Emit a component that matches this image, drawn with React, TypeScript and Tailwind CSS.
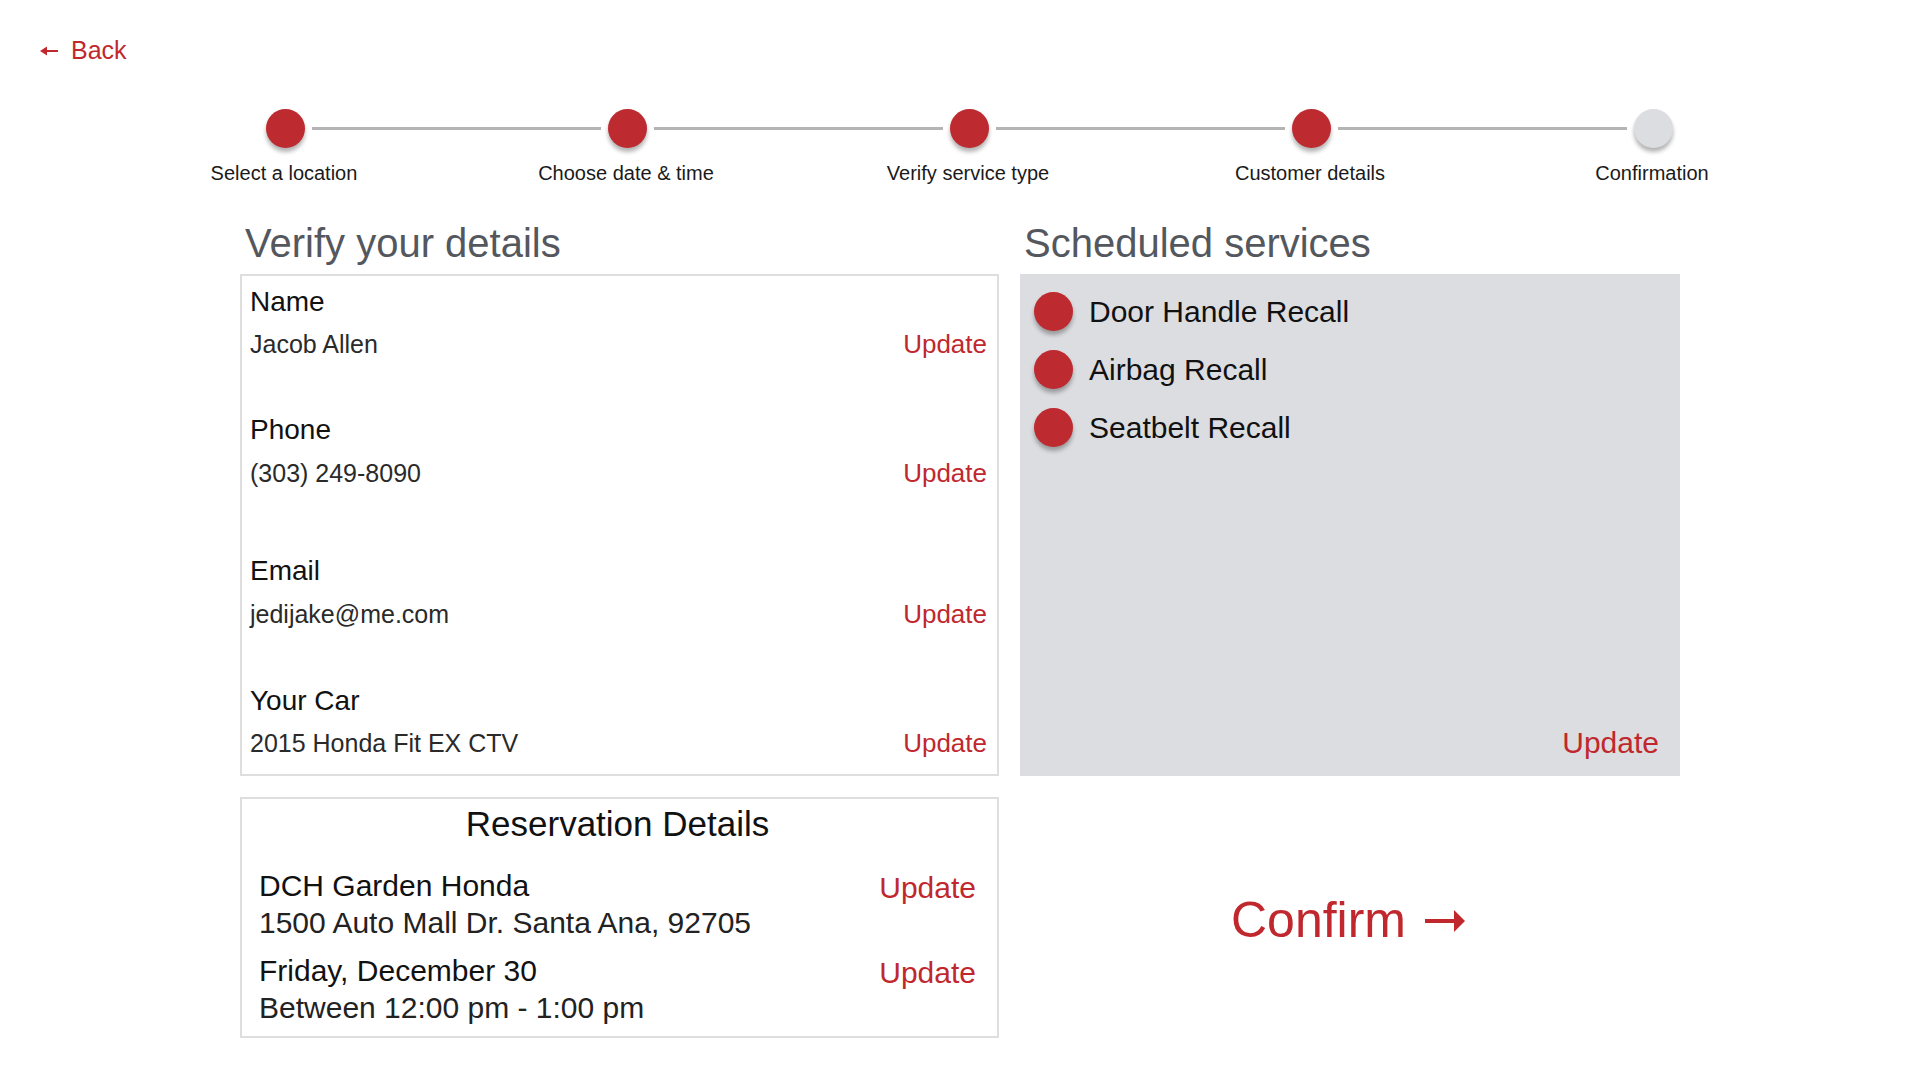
import React from "react";

function Dot({ done = true }: { done?: boolean }) {
  return (
    <div
      className={
        done
          ? "w-[39px] h-[39px] rounded-full shrink-0 bg-[#bd2a30] shadow-[0_4px_4px_rgba(0,0,0,0.3)]"
          : "w-[39px] h-[39px] rounded-full shrink-0 bg-[#dcdde0] shadow-[0_4px_4px_rgba(0,0,0,0.3)]"
      }
    />
  );
}

function Line() {
  return <div className="mx-[7px] w-[289px] h-[3px] bg-[#b4b4b4]" />;
}

function DetailGroup({
  label,
  value,
  mt,
  vmt,
}: {
  label: string;
  value: string;
  mt: string;
  vmt: string;
}) {
  return (
    <div className={mt}>
      <div className="text-[28px] leading-none text-[#111]">{label}</div>
      <div className={`${vmt} flex items-baseline justify-between`}>
        <span className="text-[25px] leading-none text-[#2a2a2a]">{value}</span>
        <span className="text-[26px] leading-none text-[#c0282e]">Update</span>
      </div>
    </div>
  );
}

export default function App() {
  const steps = [
    "Select a location",
    "Choose date & time",
    "Verify service type",
    "Customer details",
    "Confirmation",
  ];
  const services = ["Door Handle Recall", "Airbag Recall", "Seatbelt Recall"];
  return (
    <div className="w-[1920px] h-[1080px] bg-white overflow-hidden font-['Liberation_Sans',Arial,sans-serif]">
      {/* Back */}
      <div className="pt-[38px] pl-[40px] flex items-center gap-[13px] text-[#c0282e]">
        <svg width="18" height="12" viewBox="0 0 18 12" className="mt-[1px]">
          <path d="M0 6 L7 1.5 L7 10.5 Z" fill="#c0282e" />
          <rect x="5" y="5" width="13" height="2" fill="#c0282e" />
        </svg>
        <span className="text-[25px] leading-none">Back</span>
      </div>

      {/* Stepper */}
      <div className="mt-[46px] ml-[266px] flex items-center">
        <Dot />
        <Line />
        <Dot />
        <Line />
        <Dot />
        <Line />
        <Dot />
        <Line />
        <Dot done={false} />
      </div>
      <div className="mt-[15px] ml-[113px] w-[1710px] grid grid-cols-5">
        {steps.map((s) => (
          <div key={s} className="text-center text-[20px] leading-none text-[#1a1a1a]">
            {s}
          </div>
        ))}
      </div>

      {/* Main */}
      <div className="mt-[40px] ml-[240px] flex gap-[21px]">
        {/* Left column */}
        <div className="w-[759px]">
          <h2 className="pl-[5px] text-[40px] leading-none text-[#54585e]">Verify your details</h2>
          <div className="mt-[11px] h-[502px] border-2 border-[#dedede] pl-[8px] pr-[10px] pt-[12px]">
            <DetailGroup label="Name" value="Jacob Allen" mt="mt-0" vmt="mt-[15px]" />
            <DetailGroup label="Phone" value="(303) 249-8090" mt="mt-[59px]" vmt="mt-[16px]" />
            <DetailGroup label="Email" value="jedijake@me.com" mt="mt-[71px]" vmt="mt-[16px]" />
            <DetailGroup label="Your Car" value="2015 Honda Fit EX CTV" mt="mt-[60px]" vmt="mt-[15px]" />
          </div>

          <div className="mt-[21px] h-[241px] border-2 border-[#dedede] pl-[17px] pr-[21px] pt-[7px]">
            <div className="text-center text-[35px] leading-none text-[#111]">Reservation Details</div>
            <div className="mt-[30px] flex items-start justify-between">
              <div>
                <div className="text-[30px] leading-none text-[#111]">DCH Garden Honda</div>
                <div className="mt-[7px] text-[30px] leading-none text-[#222]">
                  1500 Auto Mall Dr. Santa Ana, 92705
                </div>
              </div>
              <span className="mt-[2px] text-[30px] leading-none text-[#c0282e]">Update</span>
            </div>
            <div className="mt-[18px] flex items-start justify-between">
              <div>
                <div className="text-[30px] leading-none text-[#111]">Friday, December 30</div>
                <div className="mt-[7px] text-[30px] leading-none text-[#222]">
                  Between 12:00 pm - 1:00 pm
                </div>
              </div>
              <span className="mt-[2px] text-[30px] leading-none text-[#c0282e]">Update</span>
            </div>
          </div>
        </div>

        {/* Right column */}
        <div className="w-[660px]">
          <h2 className="pl-[4px] text-[40px] leading-none text-[#54585e]">Scheduled services</h2>
          <div className="mt-[11px] h-[502px] bg-[#dcdde0] pt-[18px] pl-[14px] pr-[21px] pb-[18px] flex flex-col">
            <div className="flex flex-col gap-[19px]">
              {services.map((s) => (
                <div key={s} className="flex items-center h-[39px] gap-[16px]">
                  <Dot />
                  <span className="text-[30px] leading-none text-[#111]">{s}</span>
                </div>
              ))}
            </div>
            <span className="mt-auto self-end text-[30px] leading-none text-[#c0282e]">Update</span>
          </div>

          <div className="mt-[119px] mr-[4px] flex items-center justify-center gap-[19px] text-[#c0282e]">
            <span className="text-[50px] leading-none">Confirm</span>
            <svg width="40" height="22" viewBox="0 0 40 22" className="mt-[2px]">
              <rect x="0" y="9" width="32" height="4" fill="#c0282e" />
              <path d="M29 0 L40 11 L29 22 Z" fill="#c0282e" />
            </svg>
          </div>
        </div>
      </div>
    </div>
  );
}
